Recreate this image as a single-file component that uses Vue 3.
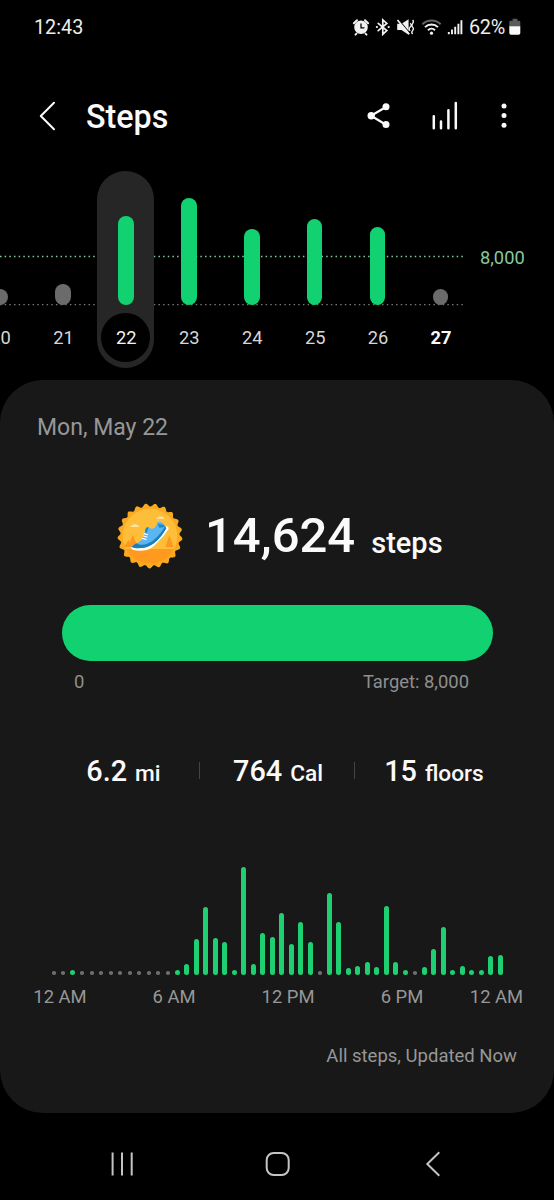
<script setup>
const days = [
  { label: '20', h: 16, low: true },
  { label: '21', h: 21, low: true },
  { label: '22', h: 89, selected: true },
  { label: '23', h: 107 },
  { label: '24', h: 76 },
  { label: '25', h: 86 },
  { label: '26', h: 78 },
  { label: '27', h: 16, low: true, today: true },
]

// Bar heights per half hour; 0 is an empty slot.
const slots = [
  0, 0, 5, 0, 0, 0, 0, 0, 0, 0, 0, 0, 0, 5, 10.7, 36, 67.7, 37, 32.7, 5, 107.7, 11, 42, 37.7,
  61.7, 30.7, 52.7, 32.7, 0, 81.7, 52.7, 6.7, 8.7, 12.7, 8, 69, 12.7, 5, 0, 7.3, 26, 47.7, 5, 8.7, 5, 5, 18.3, 20,
]

const hours = ['12 AM', '6 AM', '12 PM', '6 PM', '12 AM']

const stats = [
  { value: '6.2', unit: 'mi' },
  { value: '764', unit: 'Cal' },
  { value: '15', unit: 'floors' },
]

// Scalloped rim of the badge
const rim = Array.from({ length: 361 }, (_, i) => {
  const t = (i * Math.PI) / 180
  const r = 93 + 4.5 * Math.cos(21 * (t - 0.164))
  return `${(149 + r * Math.sin(t)).toFixed(1)},${(138 - r * Math.cos(t)).toFixed(1)}`
}).join(' ')
</script>

<template>
  <div class="screen">
    <div class="status">
      <span class="clock">12:43</span>
      <svg class="status-icons" width="114" height="20" viewBox="0 0 114 20">
        <g fill="none" stroke="#f2f2f2" stroke-width="1.6" stroke-linecap="round">
          <circle cx="9" cy="10.3" r="6" fill="#f2f2f2" />
          <path d="M1.900 6.200 5 3.200M16.100 6.200 13 3.200M4.500 16.600l-1 1M13.500 16.600l1 1" stroke-width="2" />
          <path d="M9 7v3.800h3" stroke="#000" stroke-width="1.300" />
          <path d="M26.200 6.300l8.600 7.200-4 3.700V2.800l4 3.600-8.600 7.200" stroke-width="1.700" />
          <path d="M24.800 10h.2M36.600 10h.2" stroke-width="2" />
        </g>
        <path d="M45.200 6.800h4.300L56.600 2.200v15.600l-7.100-4.900h-4.300z" fill="#f2f2f2" />
        <path d="M46.800 2.800 57.800 16" stroke="#000" stroke-width="1.100" />
        <path d="M45.500 3 57.300 17.200" stroke="#f2f2f2" stroke-width="1.700" />
        <path d="M58.200 6.200q2 1.900 0 3.800t0 3.800M60.600 3q1.600 1.800 0 3.600t0 3.500 0 3.500 0 3.400" fill="none" stroke="#f2f2f2" stroke-width="1.300" />
        <g fill="none" stroke-width="1.900">
          <path d="M70.400 7.200a13 13 0 0 1 18.200 0" stroke="#666" />
          <path d="M73 10.200a9.200 9.200 0 0 1 13 0M76 13.200a5 5 0 0 1 7 0" stroke="#f2f2f2" />
        </g>
        <circle cx="79.500" cy="16.200" r="1.600" fill="#f2f2f2" />
        <path d="M96.800 17.200v-2.200M100 17.200v-4.700M103.200 17.200V9.700M106.400 17.200V6.700M109.400 17.200V3.200" stroke="#f2f2f2" stroke-width="1.900" />
      </svg>
      <span class="percent">62%</span>
      <svg class="battery" width="12" height="18" viewBox="0 0 12 18">
        <path d="M3.600.8h4.800v2H10q1.300 0 1.300 1.300v4.700H.3V4.100Q.3 2.800 1.600 2.800h2z" fill="#5b5b5b" />
        <path d="M.3 8.300h11V15q0 1.700-1.700 1.700H2Q.3 16.700.3 15z" fill="#fafafa" />
      </svg>
    </div>

    <header class="header">
      <svg class="back" width="18" height="30" viewBox="0 0 18 30">
        <path d="M16 1.800 2.800 15 16 28.200" fill="none" stroke="#fafafa" stroke-width="2" stroke-linecap="round" stroke-linejoin="round" />
      </svg>
      <h1 class="title">Steps</h1>
      <svg class="share" width="24" height="26" viewBox="0 0 24 26">
        <path d="M19 4 4 12.700l15 9" fill="none" stroke="#fafafa" stroke-width="2.200" />
        <g fill="#fafafa">
          <circle cx="4.200" cy="12.700" r="3.700" />
          <circle cx="19" cy="3.700" r="3.500" />
          <circle cx="19" cy="21.600" r="3.500" />
        </g>
      </svg>
      <svg class="bars-icon" width="28" height="30" viewBox="0 0 28 30">
        <path d="M2.800 15.300v12M10 20.500v6.800M17.400 9.200v18.100M24.800 2v25.300" stroke="#fafafa" stroke-width="2.500" stroke-linecap="round" />
      </svg>
      <svg class="more" width="6" height="26" viewBox="0 0 6 26">
        <g fill="#fafafa">
          <circle cx="3" cy="3" r="2.500" />
          <circle cx="3" cy="12.500" r="2.500" />
          <circle cx="3" cy="22.200" r="2.500" />
        </g>
      </svg>
    </header>

    <section class="week">
      <svg class="guides" width="466" height="52" viewBox="0 0 466 52">
        <path d="M0 2.500h463" stroke="#86c99f" stroke-width="1.500" stroke-dasharray="1.500 3.160" />
        <path d="M0 50.700h463" stroke="#777" stroke-width="1.300" stroke-dasharray="1.500 3.160" />
      </svg>
      <div class="days">
        <div v-for="d in days" :key="d.label" class="day" :class="{ selected: d.selected, low: d.low, today: d.today }">
          <div class="pill">
            <div class="day-bar" :style="{ height: d.h + 'px' }"></div>
            <div class="day-label">{{ d.label }}</div>
          </div>
        </div>
      </div>
      <span class="goal">8,000</span>
    </section>

    <main class="card">
      <div class="date">Mon, May 22</div>

      <div class="total">
        <svg class="badge" width="68" height="68" viewBox="47 36 204 204">
          <polygon :points="rim" fill="#fba91f" />
          <circle cx="149" cy="138" r="82" fill="#ffbe3a" />
          <path d="M77 177h144c-13 26-40 43-72 43s-59-17-72-43z" fill="#ff9a1f" />
          <path d="M84 149l12 22h-24zM97 134l16 37H84zM207 136l13 35h-25z" fill="#ff971f" />
          <path d="M90 111q0-5 6-5 3-5 9-3 4-2 6 3 6 0 6 5zM168 87q1-5 6-5 4-6 10-2 7-1 8 7z" fill="#ffe39a" />
          <path d="M93 171q-1 7 6 9 20 4 40 0 14-3 30-20 22-22 36-44 1-5-5-7l-8 4-60 54z" fill="#fff" />
          <path d="M94 170q14-9 30-19l10-27q2-15 11-12 6 8 18 1 6-6 9-17 8-3 16 4 5 5 5 9l5 6q-15 27-37 44-19 15-40 15-20 2-27-4z" fill="#5ab5f3" />
          <path d="M94 170q7-6 14-10 16 9 36 0 26-12 50-50l4 4q-14 28-37 46-19 14-40 14-20 2-27-4z" fill="#1b7fb8" />
          <path d="M134 124q2-15 11-12l-7 20zM172 101l5 12 18-2-5-6z" fill="#2388bf" />
          <path d="M131 131l10 3M129 138l11 3M126 145l11 3" stroke="#fff" stroke-width="3.500" stroke-linecap="round" />
        </svg>
        <span class="count">14,624</span>
        <span class="count-unit">steps</span>
      </div>

      <div class="progress"></div>
      <div class="scale">
        <span>0</span>
        <span>Target: 8,000</span>
      </div>

      <div class="stats">
        <div v-for="s in stats" :key="s.unit" class="stat">
          <span class="value">{{ s.value }}</span><span class="unit">{{ s.unit }}</span>
        </div>
      </div>

      <div class="hourly">
        <div v-for="(h, i) in slots" :key="i" class="slot">
          <div :class="h ? 'bar' : 'dot'" :style="h ? { height: h + 'px' } : {}"></div>
        </div>
      </div>
      <div class="hours">
        <span v-for="(h, i) in hours" :key="i">{{ h }}</span>
      </div>

      <div class="source">All steps, Updated Now</div>
    </main>

    <nav class="nav">
      <svg width="26" height="28" viewBox="0 0 26 28">
        <path d="M3.600 2.500v23M13 2.500v23M22.700 2.500v23" stroke="#c4c4c4" stroke-width="2" />
      </svg>
      <svg width="26" height="28" viewBox="0 0 26 28">
        <rect x="2.700" y="3" width="22" height="22" rx="7" fill="none" stroke="#c4c4c4" stroke-width="2" />
      </svg>
      <svg width="26" height="28" viewBox="0 0 26 28">
        <path d="M20.300 2.300 8.300 14l12 11.700" fill="none" stroke="#c4c4c4" stroke-width="2" />
      </svg>
    </nav>
  </div>
</template>

<style>
body {
  background: #000;
}
</style>

<style scoped>
.screen {
  width: 554px;
  height: 1200px;
  overflow: hidden;
  background: #000;
  color: #fafafa;
  font-family: Roboto, sans-serif;
  display: flex;
  flex-direction: column;
}
.status {
  height: 54px;
  padding: 0 33px 0 34px;
  display: flex;
  align-items: center;
  font-size: 19.800px;
  color: #ededed;
  flex: none;
}
.clock {
  flex: 1;
}
.status-icons {
  margin-right: 3px;
}
.percent {
  width: 40px;
  letter-spacing: -0.300px;
}
.battery {
  flex: none;
}
.header {
  height: 116px;
  padding: 7px 47px 0 38px;
  box-sizing: border-box;
  display: flex;
  align-items: center;
  flex: none;
}
.title {
  margin: 2px auto 0 30px;
  font-size: 32.300px;
  line-height: 40px;
  font-weight: 500;
}
.share {
  margin-right: 40px;
}
.bars-icon {
  margin-right: 42px;
}
.week {
  position: relative;
  height: 210px;
  flex: none;
}
.guides {
  position: absolute;
  left: 0;
  top: 84px;
}
.days {
  position: relative;
  display: flex;
  margin-left: -31.500px;
  padding-top: 1px;
  width: 503.500px;
}
.day {
  flex: 1;
  display: flex;
  justify-content: center;
}
.pill {
  width: 57px;
  height: 197px;
  border-radius: 29px;
  display: flex;
  flex-direction: column;
  align-items: center;
  justify-content: flex-end;
}
.day-bar {
  width: 15.600px;
  border-radius: 8px;
  background: #12d170;
  flex: none;
}
.day-label {
  width: 49px;
  height: 49px;
  margin: 8px 0 6px;
  line-height: 50px;
  border-radius: 50%;
  text-align: center;
  text-indent: 1px;
  font-size: 18.300px;
  color: #d6d6d6;
}
.low .day-bar {
  background: #6b6b6b;
}
.selected .pill {
  background: #262626;
}
.selected .day-label {
  background: #000;
  color: #f2f2f2;
}
.today .day-label {
  font-weight: 700;
  color: #fafafa;
}
.goal {
  position: absolute;
  left: 480px;
  top: 76px;
  font-size: 18.300px;
  line-height: 24px;
  color: #86c99f;
}
.card {
  height: 733px;
  flex: none;
  border-radius: 43px;
  background: #181818;
  display: flex;
  flex-direction: column;
}
.date {
  margin: 33px 0 0 37px;
  font-size: 23px;
  line-height: 30px;
  color: #979797;
}
.total {
  margin: 59px 0 0 116px;
  height: 68px;
  display: flex;
  align-items: center;
}
.count {
  margin-left: 21px;
  font-size: 49px;
  line-height: 60px;
  font-weight: 500;
}
.count-unit {
  margin: 14px 0 0 16px;
  font-size: 29px;
  line-height: 34px;
  font-weight: 500;
}
.progress {
  margin: 35px 0 0 61.500px;
  width: 431px;
  height: 55.500px;
  border-radius: 28px;
  background: #12d170;
}
.scale {
  margin-top: 9px;
  padding: 0 85px 0 74px;
  display: flex;
  justify-content: space-between;
  font-size: 18.400px;
  line-height: 24px;
  color: #8f8f8f;
}
.stats {
  margin: 59.500px 0 0 48px;
  display: grid;
  grid-template-columns: 151px 155px 157px;
  height: 36px;
}
.stat {
  position: relative;
  display: flex;
  align-items: baseline;
  justify-content: center;
  font-weight: 500;
  line-height: 37px;
}
.stat + .stat {
  padding-left: 3px;
}
.stat + .stat::before {
  content: '';
  position: absolute;
  left: 0;
  top: 9px;
  width: 1px;
  height: 17px;
  background: #444;
}
.value {
  font-size: 28.800px;
}
.unit {
  margin-left: 8px;
  font-size: 22.700px;
}
.hourly {
  margin: 77.500px 0 0 49px;
  width: 455.800px;
  height: 108px;
  display: flex;
  align-items: flex-end;
  flex: none;
}
.slot {
  flex: 1;
  display: flex;
  justify-content: center;
}
.bar {
  width: 5px;
  border-radius: 2.500px;
  background: #1fd073;
}
.dot {
  width: 3.600px;
  height: 3.600px;
  border-radius: 50%;
  background: #6e6e6e;
}
.hours {
  margin: 10px 0 0 3px;
  display: grid;
  grid-template-columns: repeat(4, 114px) 75px;
  text-align: center;
  font-size: 18.400px;
  line-height: 24px;
  color: #979797;
}
.source {
  margin: 35px 37px 0 0;
  text-align: right;
  font-size: 18.500px;
  line-height: 24px;
  color: #979797;
}
.nav {
  height: 28px;
  margin-top: 37px;
  padding: 0 109px;
  display: flex;
  justify-content: space-between;
}
</style>
